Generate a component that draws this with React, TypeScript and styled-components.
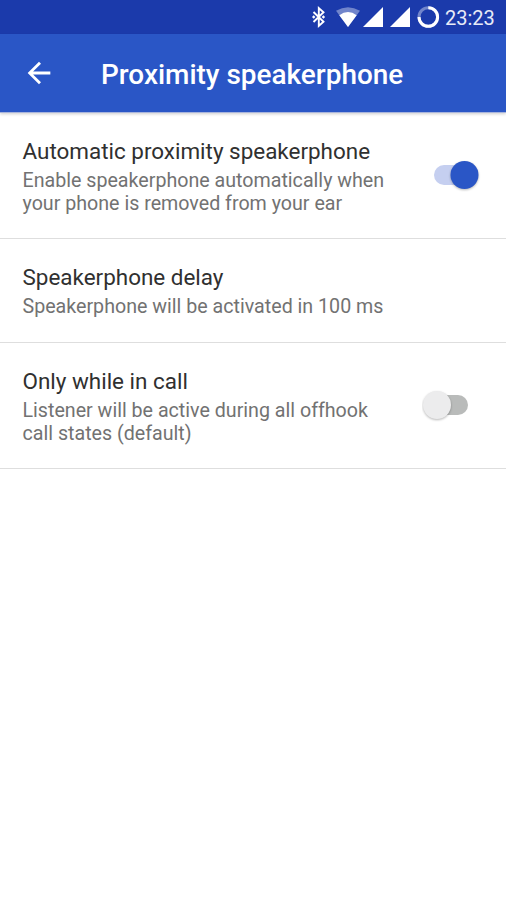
import React from "react";
import styled, { createGlobalStyle } from "styled-components";

const Global = createGlobalStyle`
  * { box-sizing: border-box; }
  body { margin: 0; background: #fff; font-family: Roboto, "Liberation Sans", sans-serif; }
`;
const Screen = styled.main`
  width: 506px; height: 900px; background: #fff; overflow: hidden;
`;
const StatusBar = styled.header`
  height: 34px; background: #1b3aab; color: #fff;
  display: flex; justify-content: flex-end; padding-right: 11px;
`;
const StatusIcons = styled.svg`
  width: 130px; height: 34px; margin-right: 5px; flex: none;
`;
const Clock = styled.time`
  font-size: 20px; line-height: 36px; width: 50px; white-space: nowrap; color: #e8ebf7;
`;
const Toolbar = styled.div`
  height: 78px; background: #2a56c6; color: #fff; display: flex; align-items: center;
  padding-left: 22px; margin-bottom: 1px;
  box-shadow: 0 1px 0 #a9b5dc, 0 2px 3px rgba(0, 0, 0, 0.2);
`;
const BackButton = styled.button`
  border: 0; padding: 0; background: none; width: 34px; height: 34px; color: inherit;
  svg { display: block; }
`;
const Title = styled.h1`
  margin: 3px 0 0 45px; font-size: 27.95px; font-weight: 500; line-height: 34px; white-space: nowrap;
`;
const Row = styled.section<{ $height: number }>`
  height: ${(p) => p.$height}px; padding: 23px 24px 0 22.5px; display: flex;
  justify-content: space-between; border-bottom: 1px solid #dedede;
`;
const RowText = styled.div`
  white-space: nowrap;
`;
const Label = styled.h2`
  margin: 0; font-size: 22.45px; font-weight: 400; line-height: 30px; color: #303030;
`;
const Summary = styled.p`
  margin: 3px 0 0; font-size: 19.65px; line-height: 23px; color: #727272;
`;
const Toggle = styled.svg`
  width: 60px; height: 40px; flex: none; margin-top: 19px;
`;
const Thumb = styled.circle`
  filter: drop-shadow(0 1.5px 1px rgba(0, 0, 0, 0.28));
`;

export default function App() {
  return (
    <Screen>
      <Global />
      <StatusBar>
        <StatusIcons viewBox="310 0 130 34" fill="#fff">
          <path d="M313.500 12l10 9.800-4.700 4.200V8l4.700 4.200-10 9.800" fill="none" stroke="#fff" strokeWidth="1.9" />
          <path d="M312 17l1.700-1.700 1.700 1.700-1.700 1.700zM321.700 17l1.700-1.700 1.700 1.700-1.700 1.700z" />
          <path d="M336 10.800Q348 3.800 360 10.800L348 27Z" opacity=".38" />
          <path d="M339.300 15.200Q348 9 356.700 15.200L348 27Z" />
          <path d="M383 7v20h-20zM410 7v20h-20z" />
          <circle cx="428.300" cy="17" r="9.300" fill="none" stroke="#fff" strokeWidth="3" opacity=".38" />
          <path d="M428.300 7.700a9.300 9.300 0 1 1-9.300 9.300" fill="none" stroke="#fff" strokeWidth="3" />
        </StatusIcons>
        <Clock>23:23</Clock>
      </StatusBar>
      <Toolbar>
        <BackButton aria-label="Back">
          <svg width="34" height="34" viewBox="0 0 24 24" fill="currentColor">
            <path d="M20 11H7.830l5.590-5.590L12 4l-8 8 8 8 1.410-1.410L7.830 13H20z" />
          </svg>
        </BackButton>
        <Title>Proximity speakerphone</Title>
      </Toolbar>
      <Row $height={126}>
        <RowText>
          <Label>Automatic proximity speakerphone</Label>
          <Summary>Enable speakerphone automatically when<br />your phone is removed from your ear</Summary>
        </RowText>
        <Toggle viewBox="422 155 60 40" role="switch" aria-checked="true">
          <rect x="434" y="165" width="40" height="20" rx="10" fill="#c5cff0" />
          <Thumb cx="464.500" cy="175" r="14" fill="#2a56c6" />
        </Toggle>
      </Row>
      <Row $height={104}>
        <RowText>
          <Label>Speakerphone delay</Label>
          <Summary>Speakerphone will be activated in 100 ms</Summary>
        </RowText>
      </Row>
      <Row $height={126}>
        <RowText>
          <Label>Only while in call</Label>
          <Summary>Listener will be active during all offhook<br />call states (default)</Summary>
        </RowText>
        <Toggle viewBox="422 385 60 40" role="switch" aria-checked="false">
          <rect x="428" y="395" width="40" height="20" rx="10" fill="#b9bbba" />
          <Thumb cx="437" cy="405" r="14" fill="#ececed" />
        </Toggle>
      </Row>
    </Screen>
  );
}
